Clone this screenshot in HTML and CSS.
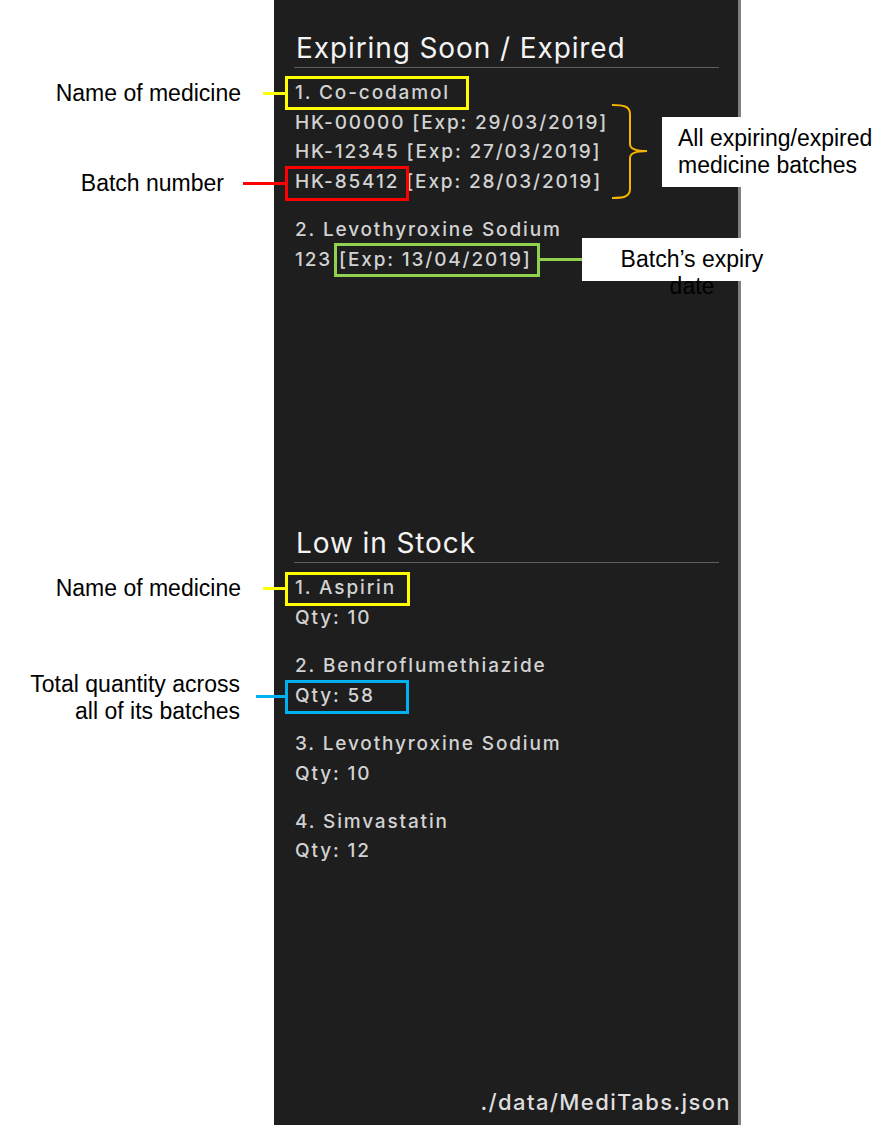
FILE: index.html
```html
<!DOCTYPE html>
<html lang="en">
<head>
<meta charset="utf-8">
<title>MediTabs – Expiring and Low Stock</title>
<link rel="stylesheet" href="styles.css">
</head>
<body>
<div class="stage">
  <aside class="panel">
    <section class="section section-expiring">
      <h2 class="section-title">Expiring Soon / Expired</h2>
      <ol class="list">
        <li class="item">
          <div class="line">1. Co-codamol</div>
          <div class="line">HK-00000 [Exp: 29/03/2019]</div>
          <div class="line">HK-12345 [Exp: 27/03/2019]</div>
          <div class="line">HK-85412 [Exp: 28/03/2019]</div>
        </li>
        <li class="item">
          <div class="line">2. Levothyroxine Sodium</div>
          <div class="line">123 [Exp: 13/04/2019]</div>
        </li>
      </ol>
    </section>
    <section class="section section-stock">
      <h2 class="section-title">Low in Stock</h2>
      <ol class="list">
        <li class="item">
          <div class="line">1. Aspirin</div>
          <div class="line">Qty: 10</div>
        </li>
        <li class="item">
          <div class="line">2. Bendroflumethiazide</div>
          <div class="line">Qty: 58</div>
        </li>
        <li class="item">
          <div class="line">3. Levothyroxine Sodium</div>
          <div class="line">Qty: 10</div>
        </li>
        <li class="item">
          <div class="line">4. Simvastatin</div>
          <div class="line">Qty: 12</div>
        </li>
      </ol>
    </section>
    <footer class="path">./data/MediTabs.json</footer>
  </aside>

  <!-- annotation overlays -->
  <div class="note note-name1">Name of medicine</div>
  <div class="connector c-yellow c-name1"></div>
  <div class="hl hl-yellow hl-name1"></div>

  <div class="note note-batch">Batch number</div>
  <div class="connector c-red c-batch"></div>
  <div class="hl hl-red hl-batch"></div>

  <svg class="brace" width="40" height="100" viewBox="0 0 40 100" aria-hidden="true">
    <path d="M1 1 C12 1 19 2 19 10 L19 40 C19 45 24 47 36 47 C24 47 19 49 19 54 L19 85 C19 93 12 94 1 94" fill="none" stroke="#f5b400" stroke-width="2"/>
  </svg>
  <div class="callout callout-all">All expiring/expired<br>medicine batches</div>

  <div class="hl hl-green hl-exp"></div>
  <div class="connector c-green c-exp"></div>
  <div class="callout callout-exp">Batch’s expiry<br>date</div>

  <div class="note note-name2">Name of medicine</div>
  <div class="connector c-yellow c-name2"></div>
  <div class="hl hl-yellow hl-name2"></div>

  <div class="note note-qty">Total quantity across<br>all of its batches</div>
  <div class="connector c-blue c-qty"></div>
  <div class="hl hl-blue hl-qty"></div>
</div>
</body>
</html>
```

FILE: styles.css
```css
html, body {
  margin: 0;
  padding: 0;
  background: #ffffff;
}

.stage {
  position: relative;
  width: 881px;
  height: 1125px;
  overflow: hidden;
}

/* ---------- dark application panel ---------- */
.panel {
  margin-left: 274px;
  width: 464px;
  height: 1125px;
  background: #1e1e1e;
  border-right: 3px solid #808080;
  box-sizing: content-box;
  display: flex;
  flex-direction: column;
  font-family: Inter, "Noto Sans", sans-serif;
}

.section {
  box-sizing: border-box;
  padding-top: 30px;
}

.section-expiring {
  height: 495px;
}

.section-title {
  margin: 0 19px 0 20px;
  font-size: 28px;
  font-weight: 400;
  line-height: 37px;
  letter-spacing: 0.9px;
  color: #f4f4f4;
  border-bottom: 1px solid #5e5e5e;
  padding-left: 2px;
}

.list {
  list-style: none;
  margin: 0;
  padding: 10px 0 0 21px;
}

.item {
  margin-bottom: 18.5px;
}

.line {
  font-size: 19px;
  font-weight: 500;
  line-height: 29.7px;
  letter-spacing: 1.85px;
  color: #d2d2d2;
  white-space: nowrap;
}

.path {
  margin-top: auto;
  text-align: right;
  padding: 0 7px 8px 0;
  font-size: 22px;
  font-weight: 500;
  line-height: 30px;
  letter-spacing: 1.4px;
  color: #dedede;
}

/* ---------- annotations ---------- */
.note,
.callout {
  position: absolute;
  font-family: "Liberation Sans", Arial, sans-serif;
  font-size: 23px;
  line-height: 27px;
  color: #000000;
  white-space: nowrap;
}

.note {
  text-align: right;
}

.note-name1 { right: 640px; top: 80px; }
.note-batch { right: 657px; top: 170px; }
.note-name2 { right: 640px; top: 575px; }
.note-qty   { right: 641px; top: 671px; }

.connector {
  position: absolute;
  height: 3px;
}

.c-yellow { background: #ffff00; }
.c-red    { background: #ff0000; }
.c-green  { background: #92d050; }
.c-blue   { background: #00b0f0; }

.c-name1 { left: 263px; top: 92px; width: 24px; }
.c-batch { left: 243px; top: 182px; width: 44px; }
.c-exp   { left: 539px; top: 258px; width: 44px; }
.c-name2 { left: 263px; top: 587px; width: 24px; }
.c-qty   { left: 256px; top: 695px; width: 31px; }

.hl {
  position: absolute;
  box-sizing: border-box;
  border: 3px solid;
}

.hl-yellow { border-color: #ffff00; }
.hl-red    { border-color: #ff0000; }
.hl-green  { border-color: #92d050; }
.hl-blue   { border-color: #00b0f0; }

.hl-name1 { left: 285px; top: 76px;  width: 184px; height: 34px; }
.hl-batch { left: 285px; top: 166px; width: 124px; height: 35px; }
.hl-exp   { left: 334px; top: 243px; width: 206px; height: 34px; }
.hl-name2 { left: 285px; top: 572px; width: 125px; height: 34px; }
.hl-qty   { left: 285px; top: 680px; width: 124px; height: 34px; }

.brace {
  position: absolute;
  left: 611px;
  top: 104px;
}

.callout {
  background: #ffffff;
  box-sizing: border-box;
}

.callout-all {
  left: 662px;
  top: 117px;
  width: 219px;
  height: 70px;
  padding: 8px 0 0 16px;
}

.callout-exp {
  left: 582px;
  top: 238px;
  width: 220px;
  height: 43px;
  padding-top: 8px;
  text-align: center;
}
```
